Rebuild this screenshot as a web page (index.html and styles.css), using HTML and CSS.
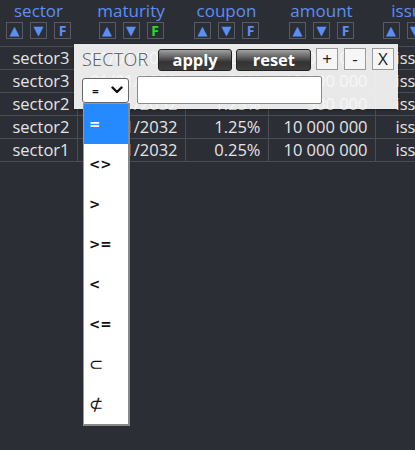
FILE: index.html
```html
<!DOCTYPE html>
<html>
<head>
<meta charset="utf-8">
<link rel="stylesheet" href="styles.css">
</head>
<body>
<div class="page">
  <table class="grid">
    <colgroup>
      <col class="c-sector"><col class="c-mat"><col class="c-coupon"><col class="c-amount"><col class="c-issuer">
    </colgroup>
    <thead>
      <tr>
        <th><div class="hname">sector</div><div class="hbtns"><span class="hb">▲</span><span class="hb">▼</span><span class="hb f">F</span></div></th>
        <th><div class="hname">maturity</div><div class="hbtns"><span class="hb">▲</span><span class="hb">▼</span><span class="hb f on">F</span></div></th>
        <th><div class="hname">coupon</div><div class="hbtns"><span class="hb">▲</span><span class="hb">▼</span><span class="hb f">F</span></div></th>
        <th><div class="hname">amount</div><div class="hbtns"><span class="hb">▲</span><span class="hb">▼</span><span class="hb f">F</span></div></th>
        <th><div class="hname">issuer</div><div class="hbtns"><span class="hb">▲</span><span class="hb">▼</span><span class="hb f">F</span></div></th>
      </tr>
    </thead>
    <tbody>
      <tr><td>sector3</td><td>01/01/2032</td><td>1.25%</td><td>10 000 000</td><td>issuer1</td></tr>
      <tr><td>sector3</td><td>01/01/2032</td><td>1.25%</td><td>10 000 000</td><td>issuer2</td></tr>
      <tr><td>sector2</td><td>01/01/2032</td><td>1.25%</td><td>500 000</td><td>issuer1</td></tr>
      <tr><td>sector2</td><td>01/01/2032</td><td>1.25%</td><td>10 000 000</td><td>issuer3</td></tr>
      <tr><td>sector1</td><td>01/01/2032</td><td>0.25%</td><td>10 000 000</td><td>issuer2</td></tr>
    </tbody>
  </table>

  <div class="popup">
    <div class="prow">
      <span class="ptitle">SECTOR</span>
      <span class="gbtn apply">apply</span>
      <span class="gbtn reset">reset</span>
      <span class="sbtn plus">+</span>
      <span class="sbtn">-</span>
      <span class="sbtn">X</span>
    </div>
    <div class="prow2">
      <div class="sel"><span class="selval">=</span><svg class="chev" width="12" height="8" viewBox="0 0 12 8"><path d="M1.5 1.5 L6 6 L10.5 1.5" fill="none" stroke="#111" stroke-width="2.4" stroke-linecap="round" stroke-linejoin="round"/></svg></div>
      <div class="inp"></div>
    </div>
  </div>

  <ul class="dd">
    <li class="sel-opt">=</li>
    <li>&lt;&gt;</li>
    <li>&gt;</li>
    <li>&gt;=</li>
    <li>&lt;</li>
    <li>&lt;=</li>
    <li class="sym">⊂</li>
    <li class="sym">⊄</li>
  </ul>
</div>
</body>
</html>
```

FILE: styles.css
```css
html, body {
  margin: 0;
  padding: 0;
  background: #2c2e35;
  overflow: hidden;
}
.page {
  position: relative;
  width: 415px;
  height: 450px;
  overflow: hidden;
  font-family: "Open Sans", "Liberation Sans", sans-serif;
}
.grid {
  border-collapse: collapse;
  table-layout: fixed;
  width: 455px;
  color: #e4e4e4;
  font-size: 16.5px;
}
.c-sector { width: 77px; }
.c-mat { width: 108px; }
.c-coupon { width: 83px; }
.c-amount { width: 107px; }
.c-issuer { width: 80px; }
.grid th {
  padding: 0 0 7px 0;
  font-weight: 500;
  text-align: center;
  vertical-align: top;
  border-bottom: 1px solid #4a4d55;
}
.hname {
  color: #5b8ff2;
  font-size: 17px;
  line-height: 22px;
  height: 22px;
  margin-top: -2px;
  padding-top: 2px;
}
.hbtns {
  display: flex;
  justify-content: center;
  gap: 7px;
}
.hb {
  box-sizing: border-box;
  width: 17px;
  height: 17px;
  border: 1px solid #565b66;
  color: #5b8ff2;
  font-size: 13px;
  line-height: 15px;
  text-align: center;
  font-family: "DejaVu Sans", sans-serif;
}
.hb.f {
  font-family: "Open Sans", sans-serif;
  font-weight: 700;
  font-size: 14px;
}
.hb.f.on {
  color: #1fe01f;
}
.grid td {
  height: 22px;
  padding: 0 7px 0 0;
  text-align: right;
  line-height: 22px;
  white-space: nowrap;
  border-bottom: 1px solid #4a4d55;
  border-left: 1px solid #4a4d55;
}
.grid td:first-child {
  border-left: none;
}
.grid td:last-child {
  text-align: left;
  padding-left: 20px;
}

.popup {
  position: absolute;
  left: 74px;
  top: 44px;
  width: 324px;
  height: 65px;
  box-sizing: border-box;
  padding: 4px 4px 0 8px;
  background: rgba(248, 248, 248, 0.93);
  box-shadow: 0 1px 3px rgba(0,0,0,0.3);
}
.prow {
  display: flex;
  align-items: center;
  height: 22px;
}
.ptitle {
  color: #555;
  font-size: 18px;
  font-weight: 300;
  letter-spacing: 0.3px;
  width: 76px;
}
.gbtn {
  box-sizing: border-box;
  width: 75px;
  height: 22px;
  margin-top: 1px;
  border: 1px solid #222;
  border-radius: 3px;
  background: linear-gradient(#a0a0a0, #5a5a5a 40%, #333 60%, #3e3e3e);
  color: #fff;
  font-weight: 700;
  font-size: 16.5px;
  line-height: 20px;
  text-align: center;
}
.gbtn.reset {
  margin-left: 4px;
}
.sbtn {
  box-sizing: border-box;
  width: 22px;
  height: 22px;
  margin-left: 6px;
  border: 1px solid #9a9a9a;
  background: #f6f6f6;
  color: #222;
  font-size: 17px;
  line-height: 20px;
  text-align: center;
}
.sbtn.plus {
  margin-left: 5px;
}
.prow2 {
  display: flex;
  align-items: center;
  margin-top: 6px;
}
.sel {
  box-sizing: border-box;
  width: 47px;
  height: 25px;
  border: 1px solid #666;
  border-radius: 3px;
  background: #fff;
  display: flex;
  align-items: center;
  justify-content: space-between;
  padding: 0 5px 0 9px;
}
.selval {
  font-size: 12px;
  font-weight: 600;
  color: #111;
  padding-top: 2px;
}
.inp {
  box-sizing: border-box;
  width: 185px;
  height: 28px;
  margin-left: 8px;
  border: 1px solid #8a8a8a;
  border-radius: 2px;
  background: #fff;
}

.dd {
  position: absolute;
  left: 83px;
  top: 103px;
  width: 47px;
  margin: 0;
  padding: 0;
  list-style: none;
  background: #fff;
  border: 1px solid #999;
  border-right: 2px solid #888;
  border-bottom: 2px solid #888;
  box-sizing: border-box;
}
.dd li {
  height: 40px;
  line-height: 40px;
  padding-left: 5px;
  font-size: 13.5px;
  font-weight: 700;
  color: #111;
  font-family: "DejaVu Sans", sans-serif;
}
.dd li.sym {
  font-size: 17px;
  font-weight: 400;
}
.dd li.sel-opt {
  background: #2589ff;
  color: #fff;
}
```
